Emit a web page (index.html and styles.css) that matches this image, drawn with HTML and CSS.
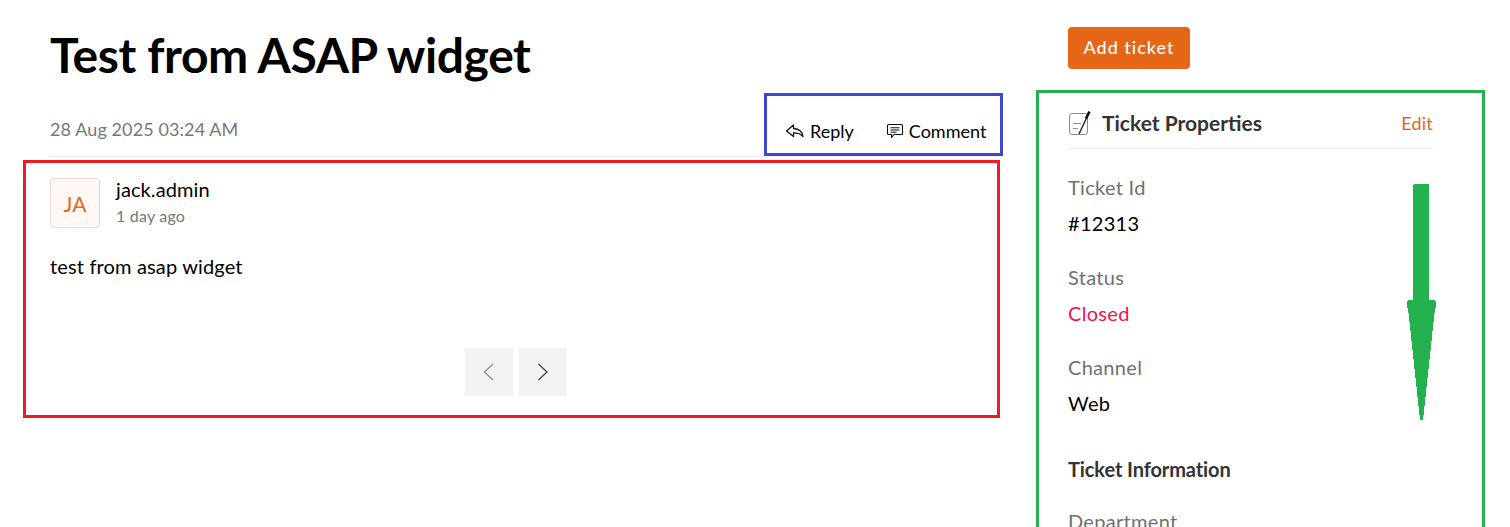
FILE: index.html
```html
<!DOCTYPE html>
<html lang="en">
<head>
    <meta charset="UTF-8">
    <title>Test from ASAP widget</title>
    <link rel="stylesheet" href="styles.css">
</head>
<body>
    <div class="page">
        <div class="main">
            <h1>Test from ASAP widget</h1>
            <div class="meta-row">
                <span class="date">28 Aug 2025 03:24 AM</span>
                <div class="actions">
                    <button class="action">
                        <svg width="20" height="16" viewBox="0 0 20 16" fill="none" stroke="#111" stroke-width="1.3" stroke-linejoin="round"><path d="M8.500 2 1.500 8l7 5.500v-3.700c3.500 0 6.800.5 9.500 3.700-.6-4.500-4-7.700-9.500-8Z"/></svg>
                        Reply
                    </button>
                    <button class="action">
                        <svg width="18" height="16" viewBox="0 0 18 16" fill="none" stroke="#111" stroke-width="1.1" stroke-linejoin="round"><path d="M2.500 1.500h13a1 1 0 0 1 1 1v8a1 1 0 0 1-1 1H8l-2.500 3v-3h-3a1 1 0 0 1-1-1v-8a1 1 0 0 1 1-1Z"/><path d="M4.500 4.800h9M4.500 7h9M4.500 9.200h6"/></svg>
                        Comment
                    </button>
                </div>
            </div>
            <div class="thread">
                <div class="author">
                    <div class="avatar">JA</div>
                    <div>
                        <div class="author-name">jack.admin</div>
                        <div class="author-time">1 day ago</div>
                    </div>
                </div>
                <p class="message">test from asap widget</p>
                <div class="pager">
                    <button class="page-btn">
                        <svg width="14" height="20" viewBox="0 0 14 20" fill="none" stroke="#8a8a8a" stroke-width="1.2"><path d="M11 2 2.500 10 11 18"/></svg>
                    </button>
                    <button class="page-btn next">
                        <svg width="14" height="20" viewBox="0 0 14 20" fill="none" stroke="#444" stroke-width="1.3"><path d="M2.500 2l8.500 8-8.500 8"/></svg>
                    </button>
                </div>
            </div>
        </div>
        <div class="side">
            <button class="add-ticket">Add ticket</button>
            <div class="props">
                <div class="props-head">
                    <div class="props-title">
                        <svg width="24" height="26" viewBox="0 0 24 26" fill="none">
                            <rect x="1.500" y="3.500" width="18" height="21" rx="2.500" stroke="#8c8c8c" stroke-width="1"/>
                            <path d="M5 13.500h8M5 18.500h5" stroke="#8c8c8c" stroke-width="1"/>
                            <path d="M11 24 19 7" stroke="#111" stroke-width="1.300"/>
                            <path d="M18 8.500 21.500 1.500" stroke="#111" stroke-width="2.600"/>
                        </svg>
                        <h2>Ticket Properties</h2>
                    </div>
                    <a class="edit">Edit</a>
                </div>
                <div class="field">
                    <div class="label">Ticket Id</div>
                    <div class="value">#12313</div>
                </div>
                <div class="field">
                    <div class="label">Status</div>
                    <div class="value closed">Closed</div>
                </div>
                <div class="field">
                    <div class="label">Channel</div>
                    <div class="value">Web</div>
                </div>
                <h3>Ticket Information</h3>
                <div class="field">
                    <div class="label">Department</div>
                </div>
            </div>
        </div>
    </div>
    <svg class="scroll-arrow" width="30" height="237" viewBox="0 0 30 237" shape-rendering="crispEdges"><path fill="#22b14c" d="M6 1l1-1h14l1 1v115h6v1h1v7h-1L16 236h-3L1 124H0v-7h1v-1h5Z"/></svg>
</body>
</html>
```

FILE: styles.css
```css
html, body {
    height: 100%;
    margin: 0;
    overflow: hidden;
}
body {
    font-family: Lato, 'Noto Sans', sans-serif;
    background-color: white;
    color: #000;
    position: relative;
}
button {
    font-family: inherit;
    cursor: pointer;
}
.page {
    display: flex;
    align-items: flex-start;
    padding-left: 23px;
}
.main {
    width: 980px;
    flex-shrink: 0;
}
h1 {
    margin: 0;
    padding: 26px 0 0 27px;
    font-size: 48px;
    line-height: 58px;
    font-weight: 700;
    letter-spacing: -0.4px;
}
.meta-row {
    display: flex;
    justify-content: space-between;
    align-items: flex-end;
    margin-top: 9px;
    margin-left: 27px;
    border-bottom: 1px solid #eee;
    height: 64px;
    box-sizing: border-box;
}
.date {
    font-size: 18px;
    letter-spacing: 0.1px;
    color: #777;
    padding-bottom: 16px;
}
.actions {
    display: flex;
    align-items: flex-end;
    gap: 32px;
    box-sizing: border-box;
    height: 63px;
    width: 239px;
    border: 3px solid #3f48cc;
    padding: 0 12px 10px 18px;
}
.action {
    display: flex;
    align-items: center;
    gap: 5px;
    border: none;
    background: none;
    padding: 0;
    font-size: 18px;
    line-height: 24px;
    color: #000;
}
.thread {
    box-sizing: border-box;
    height: 258px;
    width: 977px;
    margin-top: 3px;
    border: 3px solid #ed1c24;
    padding: 14px 24px 15px;
    position: relative;
}
.author {
    display: flex;
    gap: 16px;
    padding-top: 1px;
}
.avatar {
    box-sizing: border-box;
    width: 50px;
    height: 50px;
    display: flex;
    align-items: center;
    justify-content: center;
    border: 1px solid #f0d8c8;
    border-radius: 4px;
    background-color: #fff8f4;
    color: #e56617;
    font-size: 21px;
}
.author-name {
    font-size: 20px;
    line-height: 22px;
    letter-spacing: 0.1px;
}
.author-time {
    font-size: 16px;
    line-height: 32px;
    letter-spacing: 0.2px;
    color: #777;
}
.message {
    margin: 21px 0 0;
    font-size: 20px;
    line-height: 26px;
    letter-spacing: 0.15px;
}
.pager {
    display: flex;
    justify-content: center;
    gap: 6px;
    margin-top: 69px;
    margin-left: 8px;
}
.page-btn {
    width: 48px;
    height: 48px;
    border: none;
    background-color: #f2f2f2;
    padding: 0;
    display: flex;
    align-items: center;
    justify-content: center;
}
.page-btn.next {
    width: 47px;
}
.side {
    margin-left: 33px;
    width: 449px;
    flex-shrink: 0;
}
.add-ticket {
    display: block;
    margin: 27px 0 21px 32px;
    width: 122px;
    height: 42px;
    border: none;
    border-radius: 4px;
    background-color: #e56617;
    color: white;
    font-size: 18px;
    font-weight: 500;
    letter-spacing: 1px;
    padding: 0 0 2px;
}
.props {
    box-sizing: border-box;
    border: 3px solid #22b14c;
    border-bottom: none;
    padding: 0 49px 0 29px;
    height: 600px;
}
.props-head {
    display: flex;
    justify-content: space-between;
    align-items: center;
    box-sizing: border-box;
    height: 56px;
    padding-top: 4px;
    border-bottom: 1px solid #eee;
}
.props-title {
    display: flex;
    align-items: center;
    gap: 10px;
}
h2 {
    margin: 0;
    font-size: 21px;
    font-weight: 700;
    color: #333;
}
.edit {
    color: #e56617;
    font-size: 18px;
    letter-spacing: 0.2px;
}
.field {
    margin-top: 23px;
    height: 67px;
}
.label {
    font-size: 20px;
    line-height: 30px;
    letter-spacing: 0.3px;
    color: #707070;
}
.value {
    font-size: 20px;
    line-height: 30px;
    letter-spacing: 0.3px;
    margin-top: 6px;
}
.closed {
    color: #f5104f;
}
h3 {
    margin: 36px 0 0;
    font-size: 20px;
    font-weight: 700;
    line-height: 28px;
    letter-spacing: -0.1px;
    color: #333;
}
.scroll-arrow {
    position: absolute;
    left: 1407px;
    top: 184px;
}
```
